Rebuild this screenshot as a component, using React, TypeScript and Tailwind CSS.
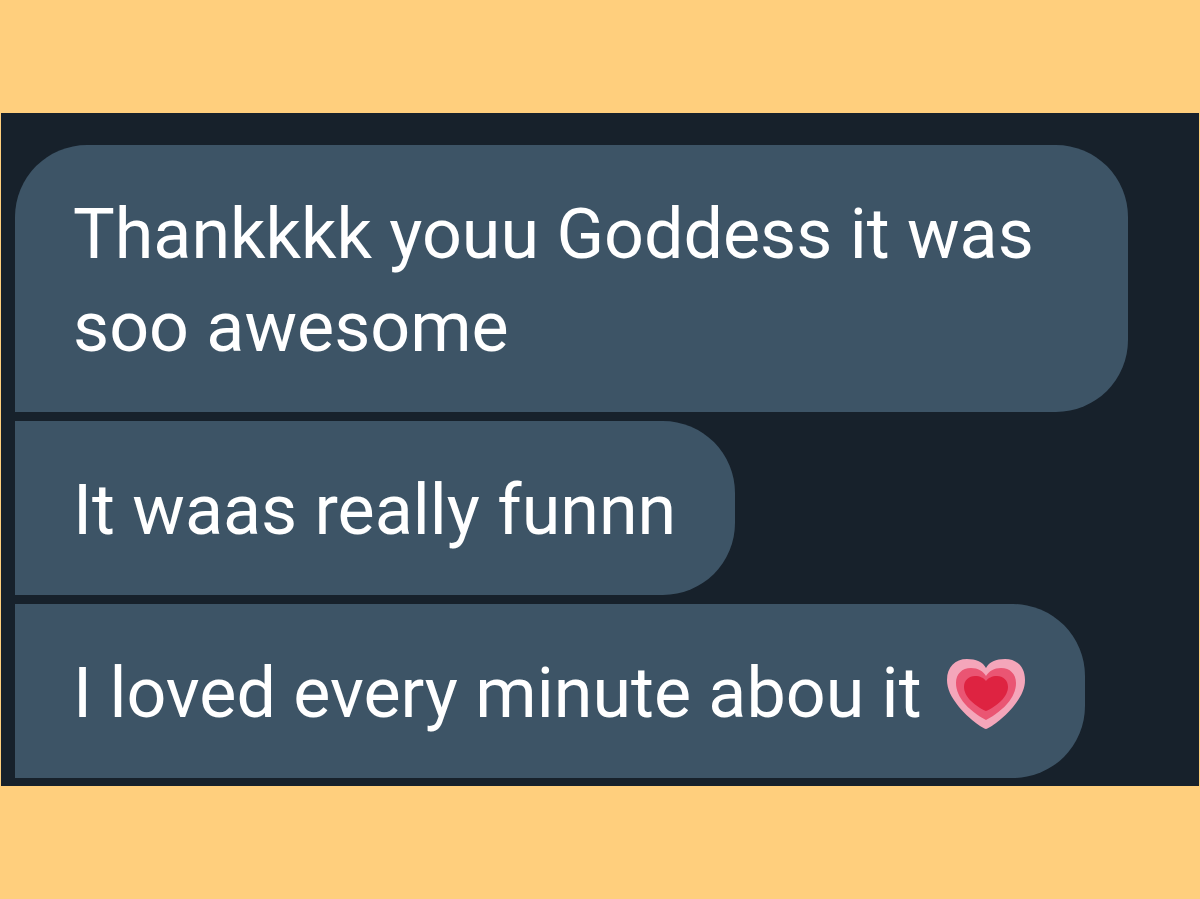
const BUBBLE = "rounded-r-[72px] bg-[#3d5466] pt-[43px] pb-[38px] pl-[58px]"

function Heart() {
  return (
    <svg viewBox="0 0 80 72" className="ml-6 h-[72px] w-20 shrink-0" role="img" aria-label="Growing heart">
      <path
        fill="#f4a6ba"
        d="M40 71C36 70 22 60 13 49C5 39 1 31 1 22C1 9 9 1 21 1C30 1 37 4 40 10C43 4 50 1 59 1C71 1 79 9 79 22C79 31 75 39 67 49C58 60 44 70 40 71Z"
      />
      <path
        fill="#ea5573"
        d="M40 62C36 60 26 54 19 46C13 39 10 32 10 25C10 16 16 10 25 10C32 10 37 13 40 18C43 13 48 10 55 10C64 10 70 16 70 25C70 32 67 39 61 46C54 54 44 60 40 62Z"
      />
      <path
        fill="#de2341"
        d="M40 53C37 52 30 48 25 43C20 38 18 33 18 29C18 22 23 18 29 18C34 18 38 20 40 23C42 20 46 18 51 18C57 18 62 22 62 29C62 33 60 38 55 43C50 48 43 52 40 53Z"
      />
    </svg>
  )
}

export default function App() {
  return (
    <main className="flex min-h-screen flex-col justify-center bg-[#ffcf7d] px-px font-['Roboto',sans-serif] text-[70px] leading-[93px] text-white">
      <section className="flex flex-col items-start gap-[9px] bg-[#17212b] pt-8 pr-[71px] pb-2 pl-[14px]">
        <p className={`${BUBBLE} w-full rounded-tl-[72px] pr-20`}>
          Thankkkk youu Goddess it was soo awesome
        </p>
        <p className={`${BUBBLE} pr-[59px]`}>It waas really funnn</p>
        <p className={`${BUBBLE} flex items-center pr-[59px]`}>
          I loved every minute abou it
          <Heart />
        </p>
      </section>
    </main>
  )
}
